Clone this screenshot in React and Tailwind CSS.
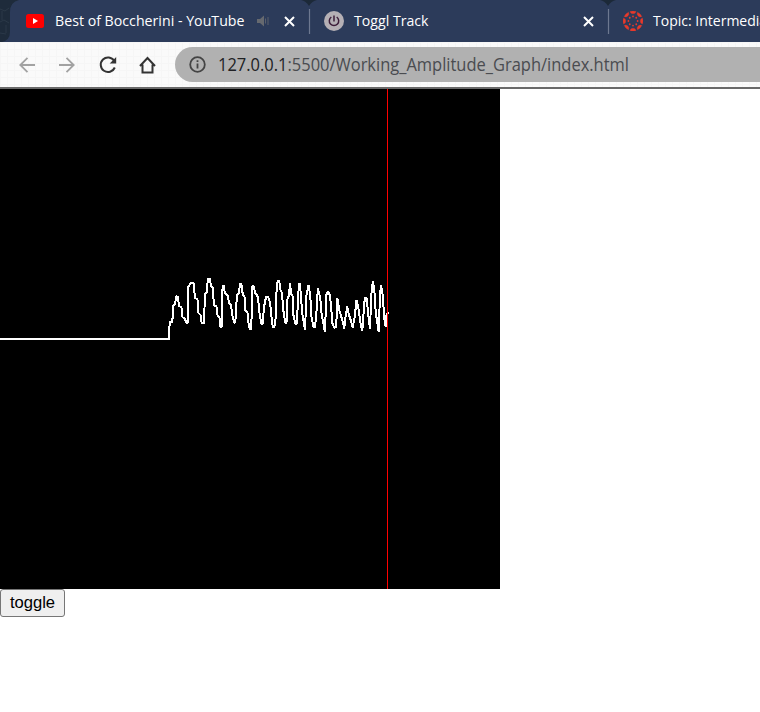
import React from "react";

const WAVE =
  "0,339 169,339 169.7,322 172.3,322 173.3,305.5 175,304 176.3,296 178,297 179,306 181.5,307.5 182.5,317 185,319 186.3,323 187.8,323 188.5,286.5 190.5,283.5 193.5,283 195,298 197.5,299.5 198.5,313 200.5,315 201.7,323 204,323 205,293.5 207,292.5 207.7,279 210,279 211,286 213,288 213.8,305 216.5,306.5 217.5,315 219.5,318 220.3,327 221.6,327 222.4,290 223.4,285 225,293.5 228,296 229,303 231,305 232.3,315 234.2,322.5 235.3,322.5 236.3,305 237,295 239,293 240,284 241.4,284 242.7,294 244.6,297 245.3,310 247.6,313 248.7,325 250,329 251.3,329 252.2,287 253.3,285.5 255.3,293 258,297 259.3,312 261.3,324 262.7,324 264,307 266,297 268,297 270,302 271.3,315 272.7,327 274.4,327 276,315 276.5,292 277.7,280.7 279.3,280.7 280,289 282,293 283.3,310 285.3,323 286.5,323 287.4,299 289.2,295 289.8,283 291.3,294 292.6,296 293.4,315 295.3,324 296.7,324 298,302 298.8,284 300,284 301.3,302 302.7,317 305.2,330 306,298 308.5,285.5 310.3,296 311.2,315 313.4,327 315,327 316.8,308 317.8,288 320.3,298 321.7,315 325,332 326.3,295 328,291 329.7,295 331,305 332.3,323 334.3,328 336.2,327 337.4,298 339.3,310 341.7,318 344.3,328.5 345.7,315 347.3,306.5 349,315 351,321 352.7,328 355,315 356.4,300 358.3,307 360.3,322 362.3,331 363.7,312 364.8,298 366.7,298 368.3,315 370,329 371.3,295 372.8,281 374.3,290 375.7,312 378.7,332 380,295 381.1,285 382.7,295 384.3,318 385.6,327 386.4,315 388.5,312";

function Close() {
  return (
    <svg className="h-[11px] w-[11px] shrink-0" viewBox="0 0 11 11">
      <path d="M1 1l9 9M10 1l-9 9" stroke="#fff" strokeWidth="2" />
    </svg>
  );
}

function YouTubeIcon() {
  return (
    <svg className="h-[14px] w-[18px] shrink-0" viewBox="0 0 18 14">
      <rect width="18" height="14" rx="2.5" fill="#f00" />
      <path d="M7 4l5 3-5 3z" fill="#fff" />
    </svg>
  );
}

function AudioIcon() {
  return (
    <svg className="ml-3 h-3 w-3 shrink-0" viewBox="0 0 12 12">
      <path d="M0 4h3l4-3.5v11L3 8H0z" fill="#66696f" />
      <path d="M8.5 3.5v5M11 2v8" stroke="#5b606b" strokeWidth="1" />
    </svg>
  );
}

function TogglIcon() {
  return (
    <svg className="h-5 w-5 shrink-0" viewBox="0 0 20 20">
      <circle cx="10" cy="10" r="10" fill="#b5b0b5" />
      <path d="M10 4.5v6M7.3 6a4.7 4.7 0 1 0 5.4 0" fill="none" stroke="#3d1e3a" strokeWidth="1.5" />
    </svg>
  );
}

function CanvasIcon() {
  return (
    <svg className="h-5 w-5 shrink-0" viewBox="0 0 20 20">
      {[0, 45, 90, 135, 180, 225, 270, 315].map((a) => (
        <g key={a} transform={`rotate(${a} 10 10)`} fill="#e8392b">
          <path d="M6.9 .6Q10-.6 13.1 .6A3.3 3.3 0 0 1 6.9 .6z" stroke="#e8392b" strokeWidth=".3" />
          <circle cx="10" cy="5.4" r=".9" />
        </g>
      ))}
    </svg>
  );
}

function TabGap() {
  return (
    <svg className="h-[42px] w-[22px] shrink-0" viewBox="0 0 22 42">
      <path d="M3 0Q8 1 11 6Q14 1 19 0z" fill="#1c2938" />
      <path d="M11.5 9v25" stroke="#6d7890" strokeWidth="1.2" />
    </svg>
  );
}

function Tabs() {
  return (
    <div className="flex h-[42px] items-center overflow-hidden bg-[#2c3b5a] text-[15px] whitespace-nowrap text-white">
      <svg className="h-[42px] w-[26px] shrink-0" viewBox="0 0 26 42">
        <path d="M0 0h19Q10 2 10 12v20q0 8-8 10H0z" fill="#1e2b3b" />
        <path d="M0 9l5 2 4-3M0 22l4-2 5 3M2 11v9M6 25v8M0 33l6 1" fill="none" stroke="#2b3948" />
      </svg>
      <YouTubeIcon />
      <svg className="ml-[11px] h-[42px] w-[190px] shrink-0 overflow-visible">
        <text x="0" y="26" textLength="189.5" lengthAdjust="spacingAndGlyphs" fill="#fff">Best of Boccherini - YouTube</text>
      </svg>
      <AudioIcon />
      <div className="ml-[15px] flex"><Close /></div>
      <div className="ml-[3px] flex"><TabGap /></div>
      <div className="ml-1 flex"><TogglIcon /></div>
      <svg className="ml-[10px] h-[42px] w-[75px] shrink-0 overflow-visible">
        <text x="0" y="26" textLength="74.5" lengthAdjust="spacingAndGlyphs" fill="#fff">Toggl Track</text>
      </svg>
      <div className="ml-[154px] flex"><Close /></div>
      <div className="ml-[3px] flex"><TabGap /></div>
      <div className="ml-[4px] flex"><CanvasIcon /></div>
      <svg className="ml-[10px] h-[42px] w-[130px] shrink-0 overflow-visible">
        <text x="0" y="26" textLength="127" lengthAdjust="spacingAndGlyphs" fill="#fff">Topic: Intermediate</text>
      </svg>
    </div>
  );
}

function Toolbar() {
  return (
    <div className="flex h-[47px] items-center overflow-hidden border-b-2 border-[#696969] bg-[#fafafa] bg-[linear-gradient(90deg,#f6f6f6_1px,transparent_1px),linear-gradient(#f6f6f6_1px,transparent_1px)] bg-size-[7px_7px]">
      <svg className="ml-[19px] h-4 w-4 shrink-0" viewBox="0 0 16 16" fill="none" stroke="#a2a2a2" strokeWidth="1.8">
        <path d="M16 8H1.5M8.5 .8L1.3 8l7.2 7.2" />
      </svg>
      <svg className="ml-6 h-4 w-4 shrink-0" viewBox="0 0 16 16" fill="none" stroke="#a2a2a2" strokeWidth="1.8">
        <path d="M0 8h14.5M7.5 .8L14.7 8l-7.2 7.2" />
      </svg>
      <svg className="ml-6 h-[18px] w-[18px] shrink-0" viewBox="0 0 18 18">
        <path d="M15.2 4.8A7.3 7.3 0 1 0 15.8 11.5" fill="none" stroke="#333" strokeWidth="2" />
        <path d="M17.2 1v6.5h-6.5z" fill="#333" />
      </svg>
      <svg className="ml-[22px] h-[18px] w-[18px] shrink-0" viewBox="0 0 18 18" fill="none" stroke="#333" strokeWidth="2">
        <path d="M1 10L8.5 2L16 10M3.5 8.5v8h10v-8" />
      </svg>
      <div className="ml-[18px] flex h-[35px] w-[620px] shrink-0 items-center rounded-l-full bg-[#b1b1b1]">
        <svg className="ml-[14px] h-[17px] w-[17px] shrink-0" viewBox="0 0 17 17">
          <circle cx="8.5" cy="8.5" r="7.3" fill="none" stroke="#444" strokeWidth="1.8" />
          <path d="M8.5 7.5v5M8.5 4.2v1.9" stroke="#444" strokeWidth="1.8" />
        </svg>
        <svg className="ml-[12px] h-[35px] w-[412px] shrink-0 overflow-visible font-['Open_Sans',sans-serif] text-[17.5px]">
          <text x="0" y="23.5" textLength="411" lengthAdjust="spacingAndGlyphs" fill="#4a4c50">
            <tspan fill="#202124">127.0.0.1</tspan>:5500/Working_Amplitude_Graph/index.html
          </text>
        </svg>
      </div>
    </div>
  );
}

export default function App() {
  return (
    <div className="h-[712px] w-[760px] overflow-hidden bg-white font-['Open_Sans',sans-serif]">
      <Tabs />
      <Toolbar />
      <svg className="block h-[500px] w-[500px] bg-black" viewBox="0 89 500 500">
        <polyline points={WAVE} fill="none" stroke="#fff" strokeWidth="2" strokeLinejoin="bevel" shapeRendering="crispEdges" />
        <path d="M387.5 89v500" stroke="#f00" strokeWidth="1" shapeRendering="crispEdges" />
      </svg>
      <button className="flex h-[28px] w-[65px] items-center justify-center rounded-[3px] border border-[#767676] bg-[#efefef] font-['Liberation_Sans',sans-serif] text-[16.6px] leading-none text-black">
        toggle
      </button>
    </div>
  );
}
